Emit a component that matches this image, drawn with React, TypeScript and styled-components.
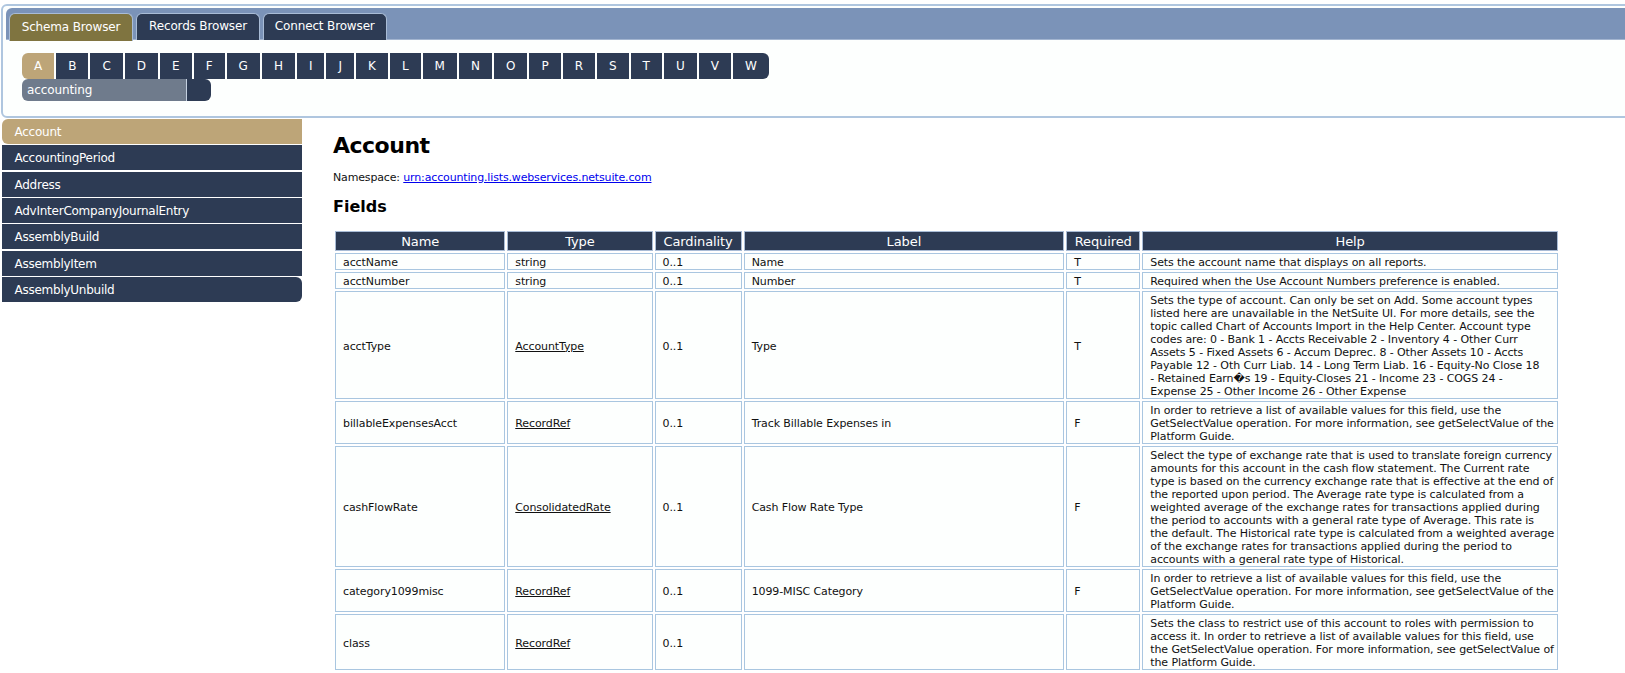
import React from "react";
import styled, { createGlobalStyle } from "styled-components";

const Global = createGlobalStyle`
  html, body { margin: 0; padding: 0; background: #fff; overflow: hidden; height: 100%; }
  body { font-family: "DejaVu Sans", Verdana, sans-serif; font-size: 11px; color: #111; letter-spacing: -0.1px; }
`;

const Page = styled.div`
  padding: 4px 0 0 1px;
  width: 1660px;
`;
const Panel = styled.header`
  border: 2px solid #afc6df;
  border-radius: 6px;
  background: #fdfffe;
  padding: 2px 3px 0;
  height: 114px;
  box-sizing: border-box;
  margin-bottom: 1px;
`;
const TabBar = styled.nav`
  display: flex;
  gap: 3.25px;
  height: 32px;
  box-sizing: border-box;
  padding: 5px 0 0 3px;
  background: #7b93b8;
  border-radius: 6px 0 0 0;
  border-bottom: 1px solid #a3b5d0;
`;
const Tab = styled.a<{ $active?: boolean }>`
  width: ${p => (p.$active ? 124 : 123.5)}px;
  box-sizing: border-box;
  height: ${p => (p.$active ? 28 : 27)}px;
  display: flex;
  align-items: center;
  justify-content: center;
  font-size: 12px;
  letter-spacing: -0.15px;
  padding-bottom: 2px;
  color: #fff;
  background: ${p => (p.$active ? "#7f7440" : "#2d3b54")};
  border: 1px solid #a9bcd6;
  border-bottom: 0;
  border-radius: 6px 6px 0 0;
`;
const Letters = styled.div`
  display: flex;
  gap: 2px;
  margin: 13px 0 0 16px;
`;
const Letter = styled.a<{ $active?: boolean; $last?: boolean }>`
  height: 26px;
  display: flex;
  align-items: center;
  padding: 0 12px;
  font-size: 12px;
  letter-spacing: 0;
  color: #fff;
  background: ${p => (p.$active ? "#bda578" : "#2d3b54")};
  border-radius: ${p => (p.$active ? "6px 0 0 6px" : p.$last ? "0 6px 6px 0" : "0")};
`;
const Search = styled.form`
  display: flex;
  width: 189px;
  height: 22px;
  margin: 0 0 0 16px;
`;
const SearchInput = styled.div`
  flex: 1;
  background: #6f7b8c;
  color: #fff;
  font-size: 12px;
  line-height: 23px;
  padding-left: 5px;
  border-radius: 6px 0 0 6px;
  border-right: 1px solid #c4d0e0;
`;
const SearchButton = styled.button`
  width: 24px;
  padding: 0;
  border: 0;
  background: #2d3b54;
  border-radius: 0 6px 6px 0;
`;
const Body = styled.div`
  display: flex;
`;
const Sidebar = styled.ul`
  list-style: none;
  margin: 0 0 0 1px;
  padding: 0;
  width: 300px;
  flex: none;
  display: flex;
  flex-direction: column;
  gap: 1.33px;
`;
const Item = styled.li<{ $active?: boolean; $last?: boolean }>`
  height: 25px;
  line-height: 26px;
  padding-left: 12.5px;
  font-size: 12px;
  letter-spacing: -0.25px;
  color: #fff;
  background: ${p => (p.$active ? "#bda578" : "#2d3b54")};
  border-radius: ${p => (p.$active ? "6px 0 0 6px" : p.$last ? "0 6px 6px 0" : "0")};
`;
const Main = styled.main`
  margin-left: 31px;
  padding-top: 14px;
`;
const Title = styled.h1`
  margin: 0;
  font-size: 22px;
  letter-spacing: -0.5px;
  line-height: 26px;
  font-weight: bold;
  color: #000;
`;
const Namespace = styled.p`
  margin: 12px 0 0;
  line-height: 13px;
  letter-spacing: -0.15px;
`;
const Link = styled.a`
  color: #0000ee;
  text-decoration: underline;
`;
const SectionTitle = styled.h2`
  margin: 13px 0 0;
  font-size: 16px;
  letter-spacing: 0;
  line-height: 20px;
  font-weight: bold;
  color: #000;
`;
const Table = styled.table`
  margin-top: 12px;
  border-collapse: separate;
  border-spacing: 2px;
  table-layout: fixed;
  width: 1227px;
`;
const Th = styled.th<{ $w: number }>`
  width: ${p => p.$w}px;
  height: 20px;
  box-sizing: border-box;
  padding: 2px 0 0;
  background: #2d3b54;
  border: 1px solid #a9bcd6;
  color: #fff;
  font-size: 13px;
  letter-spacing: -0.1px;
  font-weight: normal;
  line-height: 16px;
  text-align: center;
`;
const Td = styled.td`
  background: #fdfffe;
  border: 1px solid #a9c6e0;
  padding: 2px 7px 0;
  line-height: 13px;
  font-size: 11px;
  color: #111;
  vertical-align: middle;
`;
const HelpCell = styled(Td)`
  padding: 2px 4px 0 7px;
`;
const HelpLine = styled.span`
  display: block;
  white-space: nowrap;
`;
const TypeLink = styled.a`
  color: #111;
  text-decoration: underline;
`;

const letters = "ABCDEFGHIJKLMNOPRSTUVW".split("");
const records = ["Account", "AccountingPeriod", "Address", "AdvInterCompanyJournalEntry", "AssemblyBuild", "AssemblyItem", "AssemblyUnbuild"];
const cols: [string, number][] = [["Name", 170], ["Type", 145], ["Cardinality", 87], ["Label", 320], ["Required", 74], ["Help", 415]];
const selectHelp = [
  "In order to retrieve a list of available values for this field, use the",
  "GetSelectValue operation. For more information, see getSelectValue of the",
  "Platform Guide.",
];
const rows = [
  { n: "acctName", t: "string", l: "Name", r: "T", h: ["Sets the account name that displays on all reports."] },
  { n: "acctNumber", t: "string", l: "Number", r: "T", h: ["Required when the Use Account Numbers preference is enabled."] },
  { n: "acctType", t: "AccountType", link: true, l: "Type", r: "T", h: [
    "Sets the type of account. Can only be set on Add. Some account types",
    "listed here are unavailable in the NetSuite UI. For more details, see the",
    "topic called Chart of Accounts Import in the Help Center. Account type",
    "codes are: 0 - Bank 1 - Accts Receivable 2 - Inventory 4 - Other Curr",
    "Assets 5 - Fixed Assets 6 - Accum Deprec. 8 - Other Assets 10 - Accts",
    "Payable 12 - Oth Curr Liab. 14 - Long Term Liab. 16 - Equity-No Close 18",
    "- Retained Earn\uFFFDs 19 - Equity-Closes 21 - Income 23 - COGS 24 -",
    "Expense 25 - Other Income 26 - Other Expense",
  ] },
  { n: "billableExpensesAcct", t: "RecordRef", link: true, l: "Track Billable Expenses in", r: "F", h: selectHelp },
  { n: "cashFlowRate", t: "ConsolidatedRate", link: true, l: "Cash Flow Rate Type", r: "F", h: [
    "Select the type of exchange rate that is used to translate foreign currency",
    "amounts for this account in the cash flow statement. The Current rate",
    "type is based on the currency exchange rate that is effective at the end of",
    "the reported upon period. The Average rate type is calculated from a",
    "weighted average of the exchange rates for transactions applied during",
    "the period to accounts with a general rate type of Average. This rate is",
    "the default. The Historical rate type is calculated from a weighted average",
    "of the exchange rates for transactions applied during the period to",
    "accounts with a general rate type of Historical.",
  ] },
  { n: "category1099misc", t: "RecordRef", link: true, l: "1099-MISC Category", r: "F", h: selectHelp },
  { n: "class", t: "RecordRef", link: true, l: "", r: "", h: [
    "Sets the class to restrict use of this account to roles with permission to",
    "access it. In order to retrieve a list of available values for this field, use",
    "the GetSelectValue operation. For more information, see getSelectValue of",
    "the Platform Guide.",
  ] },
];

export default function App() {
  return (
    <Page>
      <Global />
      <Panel>
        <TabBar>
          <Tab $active>Schema Browser</Tab>
          <Tab>Records Browser</Tab>
          <Tab>Connect Browser</Tab>
        </TabBar>
        <Letters>
          {letters.map((c, i) => (
            <Letter key={c} $active={i === 0} $last={i === letters.length - 1}>{c}</Letter>
          ))}
        </Letters>
        <Search>
          <SearchInput>accounting</SearchInput>
          <SearchButton type="button" aria-label="Search" />
        </Search>
      </Panel>
      <Body>
        <Sidebar>
          {records.map((r, i) => (
            <Item key={r} $active={i === 0} $last={i === records.length - 1}>{r}</Item>
          ))}
        </Sidebar>
        <Main>
          <Title>Account</Title>
          <Namespace>Namespace: <Link href="#">urn:accounting.lists.webservices.netsuite.com</Link></Namespace>
          <SectionTitle>Fields</SectionTitle>
          <Table>
            <thead>
              <tr>{cols.map(([c, w]) => <Th key={c} $w={w}>{c}</Th>)}</tr>
            </thead>
            <tbody>
              {rows.map(r => (
                <tr key={r.n}>
                  <Td>{r.n}</Td>
                  <Td>{r.link ? <TypeLink href="#">{r.t}</TypeLink> : r.t}</Td>
                  <Td>0..1</Td>
                  <Td>{r.l}</Td>
                  <Td>{r.r}</Td>
                  <HelpCell>{r.h.map((line, i) => <HelpLine key={i}>{line}</HelpLine>)}</HelpCell>
                </tr>
              ))}
            </tbody>
          </Table>
        </Main>
      </Body>
    </Page>
  );
}
